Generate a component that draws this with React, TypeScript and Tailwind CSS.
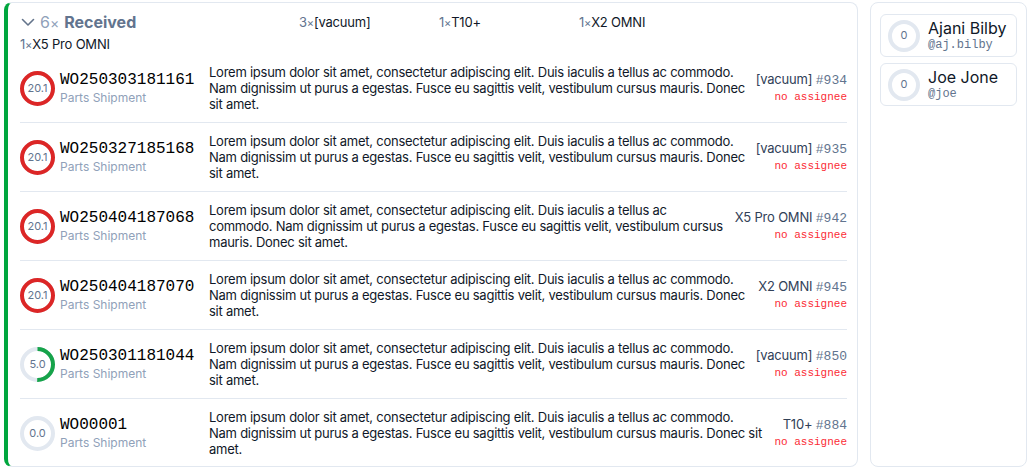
import React from 'react';

const LOREM =
  'Lorem ipsum dolor sit amet, consectetur adipiscing elit. Duis iaculis a tellus ac commodo. Nam dignissim ut purus a egestas. Fusce eu sagittis velit, vestibulum cursus mauris. Donec sit amet.';

type Order = {
  id: string;
  score: number;
  model: string;
  ticket: string;
};

const ORDERS: Order[] = [
  { id: 'WO250303181161', score: 20.1, model: '[vacuum]', ticket: '#934' },
  { id: 'WO250327185168', score: 20.1, model: '[vacuum]', ticket: '#935' },
  { id: 'WO250404187068', score: 20.1, model: 'X5 Pro OMNI', ticket: '#942' },
  { id: 'WO250404187070', score: 20.1, model: 'X2 OMNI', ticket: '#945' },
  { id: 'WO250301181044', score: 5.0, model: '[vacuum]', ticket: '#850' },
  { id: 'WO00001', score: 0.0, model: 'T10+', ticket: '#884' },
];

const COUNTS = [
  { n: 3, label: '[vacuum]' },
  { n: 1, label: 'T10+' },
  { n: 1, label: 'X2 OMNI' },
  { n: 1, label: 'X5 Pro OMNI' },
];

const PEOPLE = [
  { name: 'Ajani Bilby', handle: '@aj.bilby' },
  { name: 'Joe Jone', handle: '@joe' },
];

function Ring({ value, size, label }: { value: number; size: number; label: string }) {
  const stroke = 4;
  const r = (size - stroke) / 2;
  const c = 2 * Math.PI * r;
  const pct = Math.min(value / 10, 1);
  const color = value > 10 ? '#dc2626' : '#16a34a';
  return (
    <div className="relative shrink-0" style={{ width: size, height: size }}>
      <svg width={size} height={size} className="-rotate-90">
        <circle cx={size / 2} cy={size / 2} r={r} fill="none" stroke="#e2e8f0" strokeWidth={stroke} />
        {pct > 0 && (
          <circle
            cx={size / 2}
            cy={size / 2}
            r={r}
            fill="none"
            stroke={color}
            strokeWidth={stroke}
            strokeDasharray={`${c * pct} ${c}`}
          />
        )}
      </svg>
      <span className="absolute inset-0 flex items-center justify-center text-[11px] text-slate-500">
        {label}
      </span>
    </div>
  );
}

export default function App() {
  return (
    <div
      className="flex gap-[12px] pl-[4px] pt-[2px] bg-white h-[476px]"
      style={{ fontFamily: 'Inter, "Noto Sans", sans-serif' }}
    >
      {/* Received group */}
      <div className="w-[854px] h-[465px] shrink-0 rounded-lg border border-slate-200 border-l-4 border-l-green-600 pl-[12px] pr-[10px]">
        <div className="flex flex-wrap items-center gap-y-[2px] pt-[7px] pb-[1px]">
          <div className="flex w-[279px] items-center h-[24px]">
            <svg width="14" height="14" viewBox="0 0 14 14" className="mr-[5px] ml-[1px]">
              <path d="M1.5 4.5 L7 10 L12.5 4.5" fill="none" stroke="#64748b" strokeWidth="1.6" strokeLinecap="round" strokeLinejoin="round" />
            </svg>
            <span className="text-[16px] text-slate-400">
              6<span className="text-[14px]">×</span>
            </span>
            <span className="ml-[5px] text-[16px] font-bold text-slate-500">Received</span>
          </div>
          {COUNTS.map((c) => (
            <div key={c.label} className="w-[140px] text-[13px] leading-[16px] text-gray-900 tracking-[-0.2px]">
              <span className="text-slate-500">{c.n}</span>
              <span className="text-[11px] text-slate-500">×</span>
              {c.label}
            </div>
          ))}
        </div>

        {ORDERS.map((o, i) => (
          <div
            key={o.id}
            className={`flex items-center gap-[10px] py-[10px] ${i < ORDERS.length - 1 ? 'border-b border-slate-200' : ''}`}
          >
            <div className="flex w-[179px] shrink-0 items-center gap-[5px]">
              <Ring value={o.score} size={35} label={o.score.toFixed(1)} />
              <div>
                <div className="font-['Liberation_Mono',monospace] text-[16px] leading-[20px] text-black">{o.id}</div>
                <div className="text-[12px] leading-[16px] text-slate-400">Parts Shipment</div>
              </div>
            </div>
            <p className="flex-1 text-[13px] leading-[16px] tracking-[-0.25px] text-gray-900">{LOREM}</p>
            <div className="shrink-0 text-right">
              <div className="text-[13px] leading-[16px] tracking-[-0.2px] text-slate-700">
                {o.model}{' '}
                <span className="font-['Liberation_Mono',monospace] tracking-normal text-slate-500">{o.ticket}</span>
              </div>
              <div className="font-['Liberation_Mono',monospace] text-[11px] leading-[16px] text-red-500">
                no assignee
              </div>
            </div>
          </div>
        ))}
      </div>

      {/* Assignees */}
      <div className="w-[157px] h-[465px] shrink-0 rounded-lg border border-slate-200 pt-[11px] px-[9px] flex flex-col gap-[6px]">
        {PEOPLE.map((p) => (
          <div key={p.handle} className="flex items-center gap-[8px] rounded-md border border-slate-200 px-[7px] py-[4px]">
            <Ring value={0} size={32} label="0" />
            <div>
              <div className="text-[16px] leading-[19px] text-gray-900">{p.name}</div>
              <div className="font-['Liberation_Mono',monospace] text-[12px] leading-[14px] text-slate-500">
                {p.handle}
              </div>
            </div>
          </div>
        ))}
      </div>
    </div>
  );
}
